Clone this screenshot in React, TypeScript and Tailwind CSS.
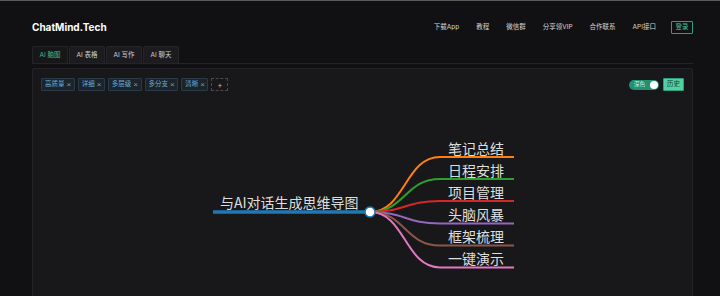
import React from "react";

const font = "font-['Inter','Noto_Sans_CJK_SC',sans-serif]";

const navItems = ["下载App", "教程", "微信群", "分享领VIP", "合作联系", "API接口"];
const tabs = ["AI 脑图", "AI 表格", "AI 写作", "AI 聊天"];
const tags = ["高质量", "详细", "多层级", "多分支", "清晰"];

const children = [
  { t: "笔记总结", y: 157, c: "#ff7f0e" },
  { t: "日程安排", y: 179, c: "#2ca02c" },
  { t: "项目管理", y: 201, c: "#d62728" },
  { t: "头脑风暴", y: 223.5, c: "#9467bd" },
  { t: "框架梳理", y: 245.5, c: "#8c564b" },
  { t: "一键演示", y: 267.5, c: "#e377c2" },
];

function MindMap() {
  const px = 370;
  const py = 212;
  return (
    <svg
      className="block"
      width={659}
      height={205}
      viewBox="33 91 659 205"
      fontFamily="'Noto Sans CJK SC', sans-serif"
    >
      {children.map((ch) => (
        <g key={ch.t}>
          <path
            d={`M${px},${py} C405,${py} 405,${ch.y} 440,${ch.y} L514,${ch.y}`}
            fill="none"
            stroke={ch.c}
            strokeWidth={2}
          />
          <text x={448} y={ch.y - 3.5} fontSize={14} fill="#dedede">
            {ch.t}
          </text>
        </g>
      ))}
      <line x1={213} y1={py} x2={px} y2={py} stroke="#1f77b4" strokeWidth={3.5} />
      <text x={220} y={208} fontSize={14} fill="#dedede">
        与AI对话生成思维导图
      </text>
      <circle cx={px} cy={py} r={5} fill="#ffffff" stroke="#1f77b4" strokeWidth={1.5} />
    </svg>
  );
}

export default function App() {
  return (
    <div className={`w-[720px] h-[296px] overflow-hidden bg-[#111114] border-t border-[#5a5a5e] ${font}`}>
      <div className="pl-[32px] pr-[27px]">
        {/* Header */}
        <div className="flex items-center justify-between h-[14px] mt-[19px] mb-[12px]">
          <div className="text-[10px] font-bold text-white leading-none tracking-[0px]">ChatMind.Tech</div>
          <div className="flex items-center">
            <div className="flex items-center gap-[17px] mr-[15px]">
              {navItems.map((n) => (
                <span key={n} className="text-[6.5px] leading-none text-[#d4d4d4]">
                  {n}
                </span>
              ))}
            </div>
            <div className="h-[13px] w-[22px] flex items-center justify-center border border-[#2e9e80] rounded-[1px] text-[6.5px] leading-none text-[#3fc596]">
              登录
            </div>
          </div>
        </div>

        {/* Tabs */}
        <div className="flex h-[18px] border-b border-[#242428] gap-[1px]">
          {tabs.map((t, i) => (
            <div
              key={t}
              className={
                i === 0
                  ? "w-[36px] flex items-center justify-center text-[6.5px] leading-none text-[#3fbf8e] bg-[#17171a] border border-b-0 border-[#242428] rounded-t-[2px]"
                  : "w-[36px] flex items-center justify-center text-[6.5px] leading-none text-[#cfcfcf] bg-[#1c1c20] border border-b-0 border-[#26262a] rounded-t-[2px]"
              }
            >
              {t}
            </div>
          ))}
        </div>

        {/* Panel */}
        <div className="mt-[4px] h-[240px] bg-[#18181b] border border-[#232327] rounded-t-[2px]">
          <div className="flex items-center justify-between pt-[9px] px-[8px] h-[22px]">
            <div className="flex items-center gap-[3px] h-[13px]">
              {tags.map((t) => (
                <div
                  key={t}
                  className="h-[13px] flex items-center gap-[2px] pl-[3px] pr-[2.5px] bg-[#1b232b] border border-[#2b3a46] rounded-[1px]"
                >
                  <span className="text-[6.5px] leading-none text-[#6aaedc]">{t}</span>
                  <span className="text-[8px] leading-none text-[#8a97a3] font-['Liberation_Sans',sans-serif]">×</span>
                </div>
              ))}
              <div className="h-[13px] w-[17px] flex items-center justify-center border border-dashed border-[#4a4a50] rounded-[1px] text-[8px] leading-none text-[#bbbbbb]">
                +
              </div>
            </div>
            <div className="flex items-center gap-[4px]">
              <div className="w-[30px] h-[10px] rounded-full bg-[#23916f] flex items-center justify-between pl-[5px] pr-[1px]">
                <span className="text-[5.5px] leading-none text-[#d8efe6]">深色</span>
                <span className="w-[8px] h-[8px] rounded-full bg-white" />
              </div>
              <div className="w-[21px] h-[13px] flex items-center justify-center bg-[#4fd1a2] border border-[#2e9e80] rounded-[1px] text-[6.5px] leading-none text-[#163a2c]">
                历史
              </div>
            </div>
          </div>
          <MindMap />
        </div>
      </div>
    </div>
  );
}
